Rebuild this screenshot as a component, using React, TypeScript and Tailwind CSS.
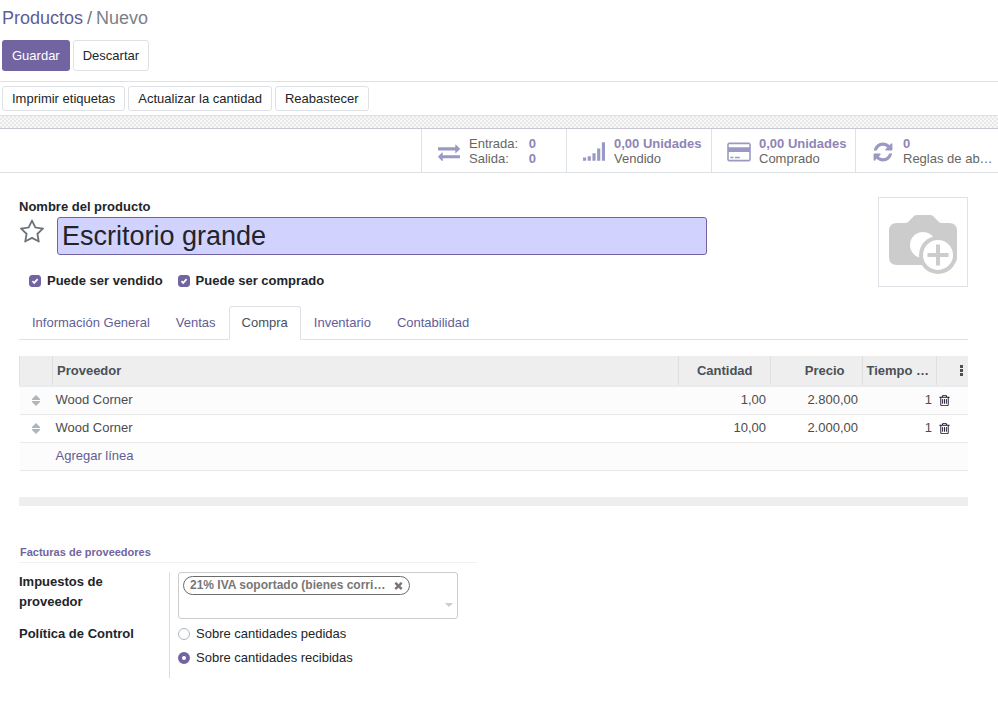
import { useState, type ReactNode } from "react";

const paths = {
  exchange:
    "M1792 1184v192q0 13-9.5 22.5t-22.5 9.5h-1376v192q0 13-9.5 22.5t-22.5 9.5q-12 0-24-10l-319-320q-9-9-9-22 0-14 9-23l320-320q9-9 23-9 13 0 22.5 9.5t9.5 22.5v192h1376q13 0 22.5 9.5t9.5 22.5zm0-544q0 14-9 23l-320 320q-9 9-23 9-13 0-22.5-9.5t-9.5-22.5v-192h-1376q-13 0-22.5-9.5t-9.5-22.5v-192q0-13 9.5-22.5t22.5-9.5h1376v-192q0-14 9-23t23-9q12 0 24 10l319 319q9 9 9 23z",
  signal:
    "M0 1344h256v256h-256zM384 1248h256v352h-256zM768 992h256v608h-256zM1152 608h256v992h-256zM1536 96h256v1504h-256z",
  card:
    "M1760 128q66 0 113 47t47 113v1216q0 66-47 113t-113 47h-1600q-66 0-113-47t-47-113v-1216q0-66 47-113t113-47zm-1600 128q-13 0-22.500 9.500t-9.500 22.500v224h1664v-224q0-13-9.500-22.500t-22.500-9.500zm1600 1280q13 0 22.500-9.500t9.500-22.500v-608h-1664v608q0 13 9.500 22.500t22.500 9.500zM256 1408v-128h256v128zM640 1408v-128h384v128z",
  refresh:
    "M1639 1056q0 5-1 7-64 268-268 434.500t-478 166.500q-146 0-282.500-55t-243.500-157l-129 129q-19 19-45 19t-45-19-19-45v-448q0-26 19-45t45-19h448q26 0 45 19t19 45-19 45l-137 137q71 66 161 102t187 36q134 0 250-65t186-179q11-17 53-117 8-23 30-23h192q13 0 22.500 9.500t9.500 22.500zm25-800v448q0 26-19 45t-45 19h-448q-26 0-45-19t-19-45 19-45l138-138q-148-137-349-137-134 0-250 65t-186 179q-11 17-53 117-8 23-30 23h-199q-13 0-22.500-9.500t-9.500-22.500v-7q65-268 270-434.500t480-166.500q146 0 284 55.500t245 156.500l130-129q19-19 45-19t45 19 19 45z",
  star:
    "M1201 1004l306-297-422-62-189-382-189 382-422 62 306 297-73 421 378-199 377 199zm527-357q0 22-26 48l-363 354 86 500q1 7 1 20 0 50-41 50-19 0-40-12l-449-236-449 236q-22 12-40 12-21 0-31.500-14.500t-10.500-35.500q0-6 2-20l86-500-364-354q-25-27-25-48 0-37 56-46l502-73 225-455q19-41 49-41t49 41l225 455 502 73q56 9 56 46z",
  times:
    "M1490 1322q0 40-28 68l-136 136q-28 28-68 28t-68-28l-294-294-294 294q-28 28-68 28t-68-28l-136-136q-28-28-28-68t28-68l294-294-294-294q-28-28-28-68t28-68l136-136q28-28 68-28t68 28l294 294 294-294q28-28 68-28t68 28l136 136q28 28 28 68t-28 68l-294 294 294 294q28 28 28 68z",
  trash:
    "M704 736v576q0 14-9 23t-23 9h-64q-14 0-23-9t-9-23v-576q0-14 9-23t23-9h64q14 0 23 9t9 23zm256 0v576q0 14-9 23t-23 9h-64q-14 0-23-9t-9-23v-576q0-14 9-23t23-9h64q14 0 23 9t9 23zm256 0v576q0 14-9 23t-23 9h-64q-14 0-23-9t-9-23v-576q0-14 9-23t23-9h64q14 0 23 9t9 23zm128 724v-948h-896v948q0 22 7 40.500t14.500 27 10.500 8.500h832q3 0 10.500-8.500t14.500-27 7-40.500zm-672-1076h448l-48-117q-7-9-17-11h-317q-10 2-17 11zm928 32v64q0 14-9 23t-23 9h-96v948q0 83-47 143.500t-113 60.500h-832q-66 0-113-58.500t-47-141.500v-952h-96q-14 0-23-9t-9-23v-64q0-14 9-23t23-9h309l70-167q15-37 54-63t79-26h320q40 0 79 26t54 63l70 167h309q14 0 23 9t9 23z",
};

function Icon({ name, className, box = "0 0 1792 1792" }: { name: keyof typeof paths; className: string; box?: string }) {
  return (
    <svg viewBox={box} className={`shrink-0 fill-current ${className}`} aria-hidden="true">
      <path d={paths[name]} />
    </svg>
  );
}

function StatButton({ icon, children }: { icon: ReactNode; children: ReactNode }) {
  return (
    <button type="button" className="flex min-w-0 items-center border-l border-[#dee2e6] pl-[15px] text-left text-[#666]">
      <span className="flex w-6 shrink-0 justify-center pt-0.5 text-[#9999c3]">{icon}</span>
      <span className="ml-2 min-w-0 flex-1 leading-[15px]">{children}</span>
    </button>
  );
}

function StatText({ value, label }: { value: string; label: string }) {
  return (
    <>
      <span className="block whitespace-nowrap font-bold text-[#8f84b7]">{value}</span>
      <span className="block whitespace-nowrap">{label}</span>
    </>
  );
}

function Check({ id, label }: { id: string; label: string }) {
  return (
    <div className="flex items-center">
      <span className="relative flex">
        <input
          id={id}
          type="checkbox"
          defaultChecked
          className="peer size-3 appearance-none rounded-[3px] border border-[#adb5bd] bg-white checked:border-[#7264a0] checked:bg-[#7264a0]"
        />
        <svg viewBox="0 0 12 12" className="pointer-events-none absolute inset-0 hidden size-3 peer-checked:block" aria-hidden="true">
          <path d="M3.500 6.200 5.200 7.900 8.600 4.200" fill="none" stroke="#fff" strokeWidth="1.700" />
        </svg>
      </span>
      <label htmlFor={id} className="pl-1.5 font-bold">
        {label}
      </label>
    </div>
  );
}

function Radio({ id, label, checked }: { id: string; label: string; checked?: boolean }) {
  return (
    <div className="flex h-6 items-center">
      <input
        id={id}
        type="radio"
        name="control"
        defaultChecked={checked}
        className="size-3 appearance-none rounded-full border border-[#adb5bd] bg-white checked:border-4 checked:border-[#7264a0]"
      />
      <label htmlFor={id} className="pl-1.5">
        {label}
      </label>
    </div>
  );
}

const tabs = ["Información General", "Ventas", "Compra", "Inventario", "Contabilidad"];
const rows = [
  { vendor: "Wood Corner", qty: "1,00", price: "2.800,00", delay: "1" },
  { vendor: "Wood Corner", qty: "10,00", price: "2.000,00", delay: "1" },
];

export default function App() {
  const [tab, setTab] = useState("Compra");
  return (
    <div className="min-h-screen bg-white font-['Liberation_Sans',Arial,sans-serif] text-[13px] leading-5 text-[#212529]">
      <header className="border-b border-[#dee2e6] px-0.5 pt-1 pb-2.5">
        <nav aria-label="Ruta" className="flex h-7 items-center gap-1 text-[18px] text-[#6c757d]">
          <a href="#productos" className="text-[#5f5e97]">
            Productos
          </a>
          <span>/</span>
          <span className="text-[#7c7f89]">Nuevo</span>
        </nav>
        <div className="mt-2 flex gap-[3px]">
          <button type="button" className="h-[31px] rounded-[3px] bg-[#7264a0] px-2.5 text-white">
            Guardar
          </button>
          <button type="button" className="h-[31px] rounded-[3px] border border-[#dee2e6] bg-white px-[9px]">
            Descartar
          </button>
        </div>
      </header>

      <div className="flex gap-[3px] border-b border-[#dee2e6] px-0.5 py-1">
        {["Imprimir etiquetas", "Actualizar la cantidad", "Reabastecer"].map((t) => (
          <button key={t} type="button" className="h-[25px] rounded-[3px] border border-[#dee2e6] bg-white px-[9px]">
            {t}
          </button>
        ))}
      </div>
      <div className="h-[13px] border-b border-[#c8c8d3] bg-[repeating-conic-gradient(#e8e8e8_0_25%,#f8f8f8_0_50%)] bg-[length:4px_4px]" />

      <div className="flex justify-end border-b border-[#dee2e6]">
        <div className="grid h-[43px] w-[577px] grid-cols-[145px_145px_144px_1fr]">
          <StatButton icon={<Icon name="exchange" className="h-6 w-[22px]" />}>
            <span className="flex w-[67px] justify-between">
              <span>Entrada:</span>
              <b className="text-[#8f84b7]">0</b>
            </span>
            <span className="flex w-[67px] justify-between">
              <span>Salida:</span>
              <b className="text-[#8f84b7]">0</b>
            </span>
          </StatButton>
          <StatButton icon={<Icon name="signal" className="size-[22px]" />}>
            <StatText value="0,00 Unidades" label="Vendido" />
          </StatButton>
          <StatButton icon={<Icon name="card" box="0 0 1920 1792" className="h-[22px] w-6" />}>
            <StatText value="0,00 Unidades" label="Comprado" />
          </StatButton>
          <StatButton icon={<Icon name="refresh" className="size-[22px]" />}>
            <StatText value="0" label="Reglas de ab…" />
          </StatButton>
        </div>
      </div>

      <main className="pt-6 pr-[30px] pb-5 pl-[19px]">
        <div className="flex items-start justify-between gap-4">
          <div className="min-w-0 flex-1">
            <label htmlFor="name" className="block font-bold">
              Nombre del producto
            </label>
            <div className="flex">
              <button type="button" aria-label="Favorito" className="flex w-[38px] shrink-0 items-start pt-0.5 text-[#6c757d]">
                <Icon name="star" className="size-[26px]" />
              </button>
              <input
                id="name"
                defaultValue="Escritorio grande"
                className="h-[38px] w-full max-w-[650px] rounded-[3px] border border-[#7264a0] bg-[#d2d2ff] px-1 text-[27px] outline-none"
              />
            </div>
            <div className="mt-4 flex gap-[15px] pl-2.5">
              <Check id="sold" label="Puede ser vendido" />
              <Check id="bought" label="Puede ser comprado" />
            </div>
          </div>
          <button type="button" aria-label="Añadir imagen" className="size-[90px] shrink-0 border border-[#dee2e6] bg-white">
            <svg viewBox="0 0 88 88" className="size-full" aria-hidden="true">
              <path
                d="M18 25h8q2 0 3-1l6-6q1-1 3-1h13q2 0 3 1l6 6q1 1 3 1h7q8 0 8 8v26q0 8-8 8H18q-8 0-8-8V33q0-8 8-8z"
                fill="#ccc"
              />
              <circle cx="44" cy="47" r="13" fill="#fff" />
              <circle cx="59" cy="57" r="19" fill="#ccc" />
              <circle cx="59" cy="57" r="15" fill="#fff" />
              <path d="M59 46.500v21M48.500 57h21" stroke="#ccc" strokeWidth="4" />
            </svg>
          </button>
        </div>

        <div role="tablist" className="mt-[15px] flex border-b border-[#dee2e6]">
          {tabs.map((t) => (
            <button
              key={t}
              type="button"
              role="tab"
              aria-selected={t === tab}
              onClick={() => setTab(t)}
              className={
                t === tab
                  ? "-mb-px h-[34px] rounded-t-[3px] border border-[#dee2e6] border-b-white bg-white px-3 text-[#495057]"
                  : "-mb-px h-[34px] border border-transparent px-3 text-[#5f5e97]"
              }
            >
              {t}
            </button>
          ))}
        </div>

        <table className="mt-4 w-full table-fixed border-collapse text-[#4c4c4c]">
          <colgroup>
            <col className="w-[33px]" />
            <col />
            <col className="w-[92px]" />
            <col className="w-[92px]" />
            <col className="w-[74px]" />
            <col className="w-8" />
          </colgroup>
          <thead className="border-b-2 border-[#e9ecef] bg-[#eee] text-[#495057]">
            <tr className="h-[30px]">
              <th aria-label="Orden" className="border-l border-[#dfdfdf]" />
              <th className="border-l border-[#dfdfdf] px-1 text-left">Proveedor</th>
              <th className="border-l border-[#dfdfdf] pr-[17px] text-right">Cantidad</th>
              <th className="border-l border-[#dfdfdf] pr-[17px] text-right">Precio</th>
              <th className="border-l border-[#dfdfdf] px-1 text-left whitespace-nowrap">Tiempo …</th>
              <th className="border-l border-[#dfdfdf]">
                <button type="button" aria-label="Columnas opcionales" className="flex w-full justify-end pr-[5px]">
                  <svg viewBox="0 0 3 11" className="h-[11px] w-[3px] fill-current" aria-hidden="true">
                    <path d="M0 0h3v3H0zM0 4h3v3H0zM0 8h3v3H0z" />
                  </svg>
                </button>
              </th>
            </tr>
          </thead>
          <tbody>
            {rows.map((r) => (
              <tr key={r.qty} className="h-7 border-b border-[#e9e9e9] odd:bg-[#fcfcfc]">
                <td>
                  <svg viewBox="0 0 8 11" className="mx-auto h-[11px] w-2 fill-[#adb5bd]" aria-hidden="true">
                    <path d="M4 0 8 4v1H0V4zM4 11 8 7V6H0v1z" />
                  </svg>
                </td>
                <td className="px-[3px]">{r.vendor}</td>
                <td className="px-1 text-right">{r.qty}</td>
                <td className="px-1 text-right">{r.price}</td>
                <td className="px-1 text-right">{r.delay}</td>
                <td className="px-0.5">
                  <button type="button" aria-label="Eliminar" className="flex text-[#1f1430]">
                    <Icon name="trash" className="size-[13px]" />
                  </button>
                </td>
              </tr>
            ))}
            <tr className="h-7 border-b border-[#e9e9e9] bg-[#fcfcfc]">
              <td />
              <td colSpan={5} className="px-[3px]">
                <a href="#agregar" className="text-[#5f5e97]">
                  Agregar línea
                </a>
              </td>
            </tr>
          </tbody>
        </table>
        <div className="mt-[26px] h-[9px] bg-[#eee]" />

        <section className="mt-9 max-w-[458px]">
          <h2 className="border-b border-[#f0f0f0] pl-px text-[11px] font-bold text-[#7264a0]">Facturas de proveedores</h2>
          <div className="mt-[9px] grid grid-cols-[151px_1fr]">
            <div className="border-r border-[#ddd]">
              <label htmlFor="taxes" className="block h-[50px] w-[110px] font-bold">
                Impuestos de proveedor
              </label>
              <div id="policy" className="h-14 pt-0.5 font-bold">
                Política de Control
              </div>
            </div>
            <div className="pl-2">
              <div className="flex h-[47px] w-[280px] flex-col rounded-[3px] border border-[#ccc] px-1 pt-[3px]">
                <span className="flex h-[19px] w-[227px] shrink-0 items-center justify-between rounded-full border border-[#6c6c6c] px-1.5 text-[12px] font-bold text-[#777]">
                  21% IVA soportado (bienes corri…
                  <button type="button" aria-label="Quitar impuesto">
                    <Icon name="times" className="size-[9px]" box="200 200 1392 1392" />
                  </button>
                </span>
                <span className="flex items-center">
                  <input id="taxes" className="h-5 min-w-0 flex-1 outline-none" />
                  <svg viewBox="0 0 8 4" className="h-1 w-2 fill-[#ccc]" aria-hidden="true">
                    <path d="M0 0h8L4 4z" />
                  </svg>
                </span>
              </div>
              <div role="radiogroup" aria-labelledby="policy" className="pt-[3px]">
                <Radio id="ordered" label="Sobre cantidades pedidas" />
                <Radio id="received" label="Sobre cantidades recibidas" checked />
              </div>
            </div>
          </div>
        </section>
      </main>
    </div>
  );
}
